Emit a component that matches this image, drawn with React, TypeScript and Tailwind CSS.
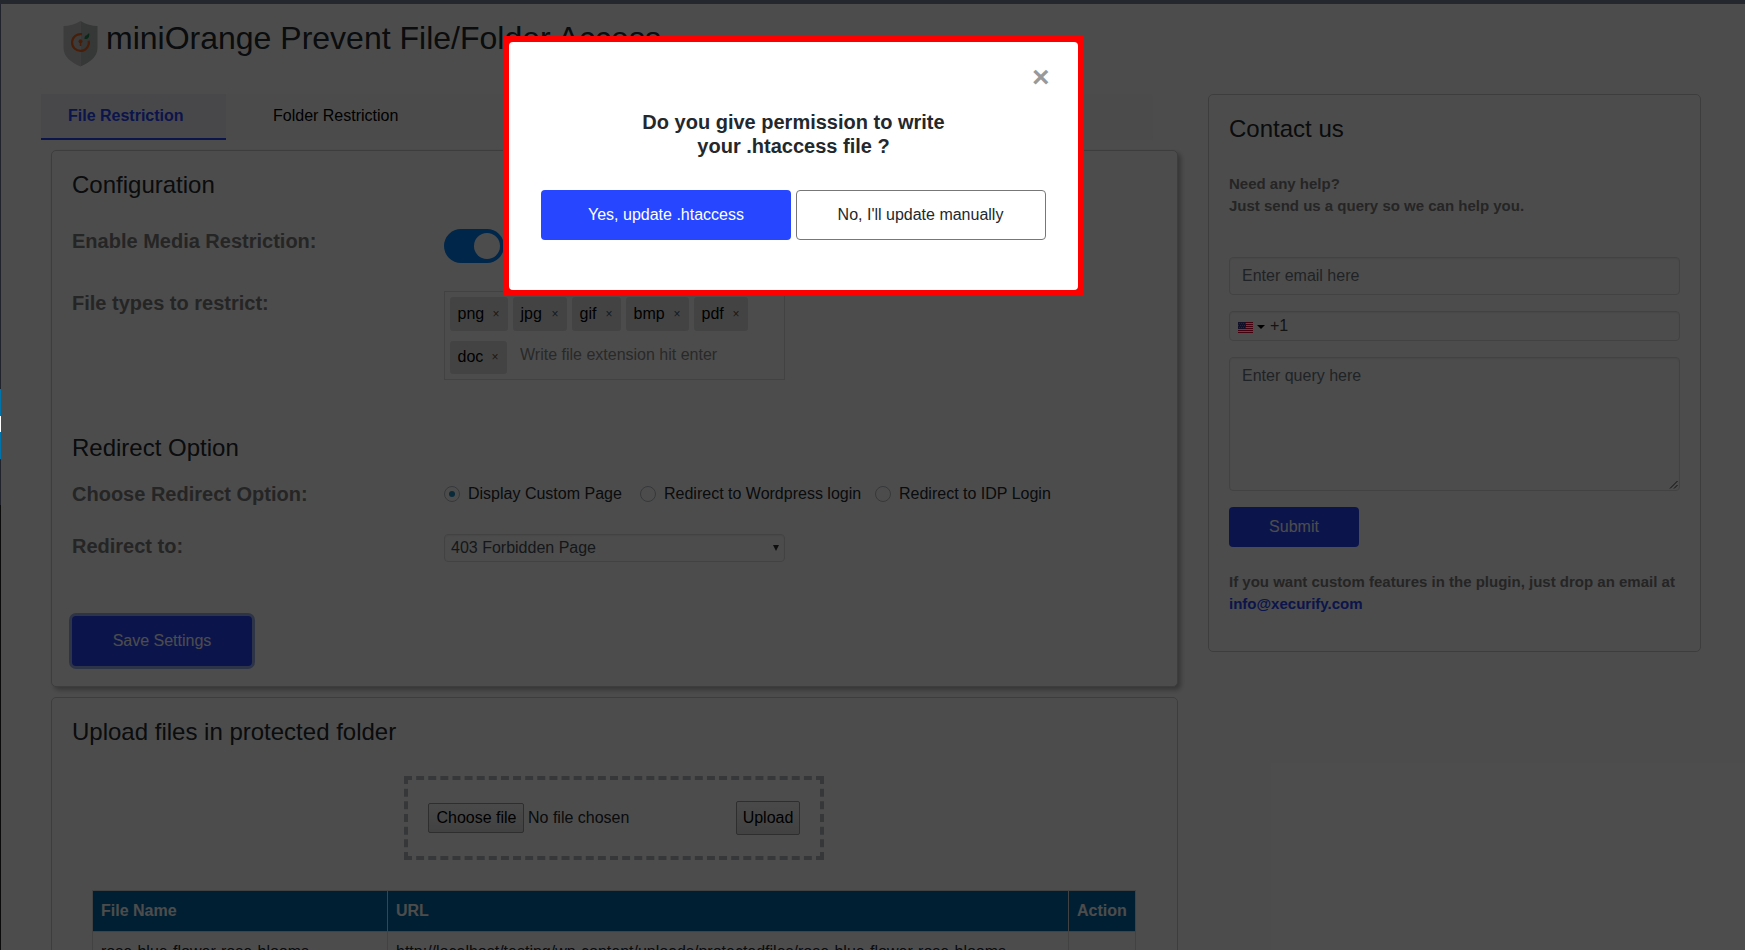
import React from "react";

const card = "rounded-[5px] border border-[#ccc] bg-white";
const label = "text-[20px] leading-6 font-bold text-[#7d7d7d]";
const primary = "bg-[#2646ff] text-white";
const field = "rounded-[4px] border border-[#ddd] shadow-[inset_0_1px_2px_rgba(0,0,0,0.07)]";

function Logo() {
  return (
    <svg width="35" height="46" viewBox="0 0 35 46" className="mt-px block shrink-0">
      <path d="M17.500 0C12 3.500 6 5 .5 5v22c0 9 8 14.500 17 18.500z" fill="#c9cacc" />
      <path d="M17.500 0c5.500 3.500 11.500 5 17 5v22c0 9-8 14.500-17 18.500z" fill="#b6b8ba" />
      <path d="M19 13.200A8.400 8.400 0 1 0 25.700 19.800" fill="none" stroke="#f2651b" strokeWidth="2.200" />
      <path d="M21.500 18c0-2.600 1-4 2.500-3.800.5-1.200 1.300-1.700 2.300-1.700.3 3.500-1 6-4.800 5.500z" fill="#1e8a50" />
      <circle cx="17.500" cy="20.300" r="2" fill="#f2651b" />
      <path d="M16.700 20.500h1.600v4.500h-1.600z" fill="#f2651b" />
    </svg>
  );
}

function Flag() {
  return (
    <svg width="15" height="12" viewBox="0 0 15 12" className="block">
      <path d="M0 0h15v12H0z" fill="#fff" />
      <path d="M0 .5h15M0 2.500h15M0 4.500h15M0 6.500h15M0 8.500h15M0 10.500h15" stroke="#e00030" />
      <path d="M0 0h8v7H0z" fill="#3c3b8e" />
      <path d="M1 1.500h7M0 3.500h7M1 5.500h7" stroke="#7f7fc0" strokeDasharray="1 1" />
    </svg>
  );
}

function Radio({ text, checked, className }: { text: string; checked?: boolean; className: string }) {
  return (
    <div className={"flex items-center " + className}>
      <span className="mr-2 flex size-4 items-center justify-center rounded-full border border-[#b4b9be]">
        {checked && <span className="size-1.5 rounded-full bg-[#1e8cbe]" />}
      </span>
      <span className="whitespace-nowrap">{text}</span>
    </div>
  );
}

const tags = [
  ["png", "w-[58px]"],
  ["jpg", "w-[54px]"],
  ["gif", "w-[49px]"],
  ["bmp", "w-[63px]"],
  ["pdf", "w-[54px]"],
  ["doc", "w-[57px]"],
];

export default function App() {
  return (
    <div className="relative h-[950px] w-[1745px] overflow-hidden bg-white font-['Liberation_Sans',Arial,sans-serif] text-[16px] leading-6 text-[#23282d]">
      <div className="flex h-full flex-col">
        <div className="h-1 shrink-0 bg-[#7a869a]" />
        <div className="flex min-h-0 flex-1">
          <div className="w-px shrink-0 bg-[#6b7690]" />
          <div className="w-[1177px] shrink-0 pl-10">
            <header className="flex h-[90px] pt-4 pl-[22px]">
              <Logo />
              <h1 className="ml-2 pt-[2px] text-[32px] leading-[32px] whitespace-nowrap">miniOrange Prevent File/Folder Access</h1>
            </header>
            <nav className="flex h-[46px] w-[1112px] bg-[#fafafa] text-black">
              <div className="w-[185px] border-b-2 border-[#2646ff] bg-[#f0f0f7] pt-[10px] pl-[27px] font-bold text-[#2646ff]">File Restriction</div>
              <div className="pt-[10px] pl-[47px]">Folder Restriction</div>
            </nav>

            <section className={card + " mt-2.5 ml-2.5 h-[537px] w-[1127px] pl-5 shadow-[3px_3px_5px_rgba(0,0,0,0.3)]"}>
              <h2 className="pt-[19px] text-[24px] leading-[29px]">Configuration</h2>
              <div className="mt-[30px] flex h-[62px]">
                <div className={label + " w-[372px]"}>Enable Media Restriction:</div>
                <div className="flex h-[34px] w-[60px] items-center justify-end rounded-full bg-[#0080f5] pr-1">
                  <div className="size-[26px] rounded-full bg-white" />
                </div>
              </div>
              <div className="flex h-[142px]">
                <div className={label + " w-[372px]"}>File types to restrict:</div>
                <div className="flex h-[89px] w-[341px] flex-wrap content-start gap-x-[5px] gap-y-[10px] border border-[#ddd] px-[5px] pt-[5px] text-black">
                  {tags.map(([name, width]) => (
                    <span key={name} className={"flex h-[33.500px] items-center justify-between rounded-[3px] bg-[#e2e2e2] pr-[8.500px] pl-[7.500px] " + width}>
                      {name}
                      <span className="text-[12px] text-[#555]">×</span>
                    </span>
                  ))}
                  <span className="ml-2 pt-[2px] text-[#8a8a8a]">Write file extension hit enter</span>
                </div>
              </div>
              <h2 className="text-[24px] leading-[29px]">Redirect Option</h2>
              <div className="mt-[20px] flex h-[52px]">
                <div className={label + " w-[372px]"}>Choose Redirect Option:</div>
                <div className="flex h-6 text-[#23282d]">
                  <Radio text="Display Custom Page" checked className="w-[196px]" />
                  <Radio text="Redirect to Wordpress login" className="w-[235px]" />
                  <Radio text="Redirect to IDP Login" className="" />
                </div>
              </div>
              <div className="flex h-[82px]">
                <div className={label + " w-[372px]"}>Redirect to:</div>
                <div className={field + " flex h-7 w-[341px] items-center justify-between pr-[5px] pl-1.5 text-[#495057]"}>
                  403 Forbidden Page
                  <span className="h-0 w-0 border-x-[3px] border-t-[6px] border-x-transparent border-t-[#333]" />
                </div>
              </div>
              <button className={primary + " h-[50px] w-[180px] rounded-[4px] shadow-[0_0_0_3px_#97adf0]"}>Save Settings</button>
            </section>

            <section className={card + " mt-[10px] ml-2.5 h-[400px] w-[1127px] pl-5"}>
              <h2 className="pt-[19px] text-[24px] leading-[29px]">Upload files in protected folder</h2>
              <div className="mt-[30px] ml-[332px] flex h-[84px] w-[420px] items-center border-4 border-dashed border-[#b4b9be] px-5 text-black">
                <span className="flex h-[30px] w-[96px] items-center justify-center rounded-[2px] border border-[#999] bg-linear-to-b from-[#f7f7f7] to-[#dcdcdc] pl-px whitespace-nowrap">Choose file</span>
                <span className="ml-1 text-[#23282d]">No file chosen</span>
                <span className="ml-auto flex h-[34px] w-[64px] items-center justify-center rounded-[2px] border border-[#999] bg-linear-to-b from-[#f7f7f7] to-[#dcdcdc]">Upload</span>
              </div>
              <div className="mt-[30px] ml-5 grid w-[1044px] grid-cols-[295px_681px_67px] border-t border-l border-[#ddd]">
                {["File Name", "URL", "Action"].map((t) => (
                  <div key={t} className="h-[41px] border-r border-b border-[#ddd] bg-[#0069aa] pt-2 pl-2 font-bold text-white">{t}</div>
                ))}
                {["rose-blue-flower-rose-blooms", "http://localhost/testing/wp-content/uploads/protectedfiles/rose-blue-flower-rose-blooms", ""].map((t) => (
                  <div key={t} className="h-[60px] border-r border-b border-[#ddd] pt-2 pl-2 whitespace-nowrap">{t}</div>
                ))}
              </div>
            </section>
          </div>

          <aside className={card + " mt-[90px] ml-[30px] h-[558px] w-[493px] px-5"}>
            <h2 className="pt-[19px] text-[24px] leading-[29px]">Contact us</h2>
            <p className="mt-[30px] text-[15px] leading-[22px] font-bold text-[#7d7d7d]">
              Need any help?
              <br />
              Just send us a query so we can help you.
            </p>
            <div className={field + " mt-[40px] flex h-[38px] items-center px-3 text-[#6c757d]"}>Enter email here</div>
            <div className={field + " mt-4 flex h-[30px] items-center pl-2 text-[#444]"}>
              <span className="pt-[3px]"><Flag /></span>
              <span className="mt-[2px] ml-[4px] h-0 w-0 border-x-4 border-t-4 border-x-transparent border-t-black" />
              <span className="ml-[5px]">+1</span>
            </div>
            <div className={field + " relative mt-4 h-[134px] px-3 pt-1.5 text-[#6c757d]"}>
              Enter query here
              <svg width="9" height="9" viewBox="0 0 9 9" className="absolute right-px bottom-px"><path d="M1 8.500 8.500 1M5 8.500 8.500 5" stroke="#333" /></svg>
            </div>
            <button className={primary + " mt-4 h-10 w-[130px] rounded-[4px]"}>Submit</button>
            <p className="mt-[24px] text-[15px] leading-[22px] font-bold whitespace-nowrap text-[#7d7d7d]">
              If you want custom features in the plugin, just drop an email at
              <br />
              <span className="text-[#2646ff]">info@xecurify.com</span>
            </p>
          </aside>
        </div>
      </div>

      <div className="absolute inset-0 flex justify-center bg-black/70">
        <div className="mt-9 mr-[159px] h-[260px] w-[581px] bg-[#f00] p-1.5">
          <div className="h-full rounded-[4px] bg-white px-8 text-center">
            <div className="flex h-[68px] items-end justify-end pt-5">
              <span className="-mr-[4px] h-[52px] text-[30px] leading-[37px] font-bold text-[#999]">×</span>
            </div>
            <h3 className="pl-[1px] text-[20px] leading-6 font-bold">
              Do you give permission to write
              <br />
              your .htaccess file ?
            </h3>
            <div className="mt-8 flex gap-[5px]">
              <button className={primary + " h-[50px] w-[250px] rounded-[4px] pl-px"}>Yes, update .htaccess</button>
              <button className="h-[50px] w-[250px] rounded-[4px] border border-[#777] bg-white">No, I'll update manually</button>
            </div>
          </div>
        </div>
      </div>

      <div className="absolute top-[389px] left-0 flex h-[561px] w-px flex-col">
        <div className="h-[27px] bg-[#0073aa]" />
        <div className="h-4 bg-white" />
        <div className="h-[27px] bg-[#0073aa]" />
        <div className="h-[46px]" />
        <div className="flex-1 bg-[#0b0b0b]" />
      </div>
    </div>
  );
}
